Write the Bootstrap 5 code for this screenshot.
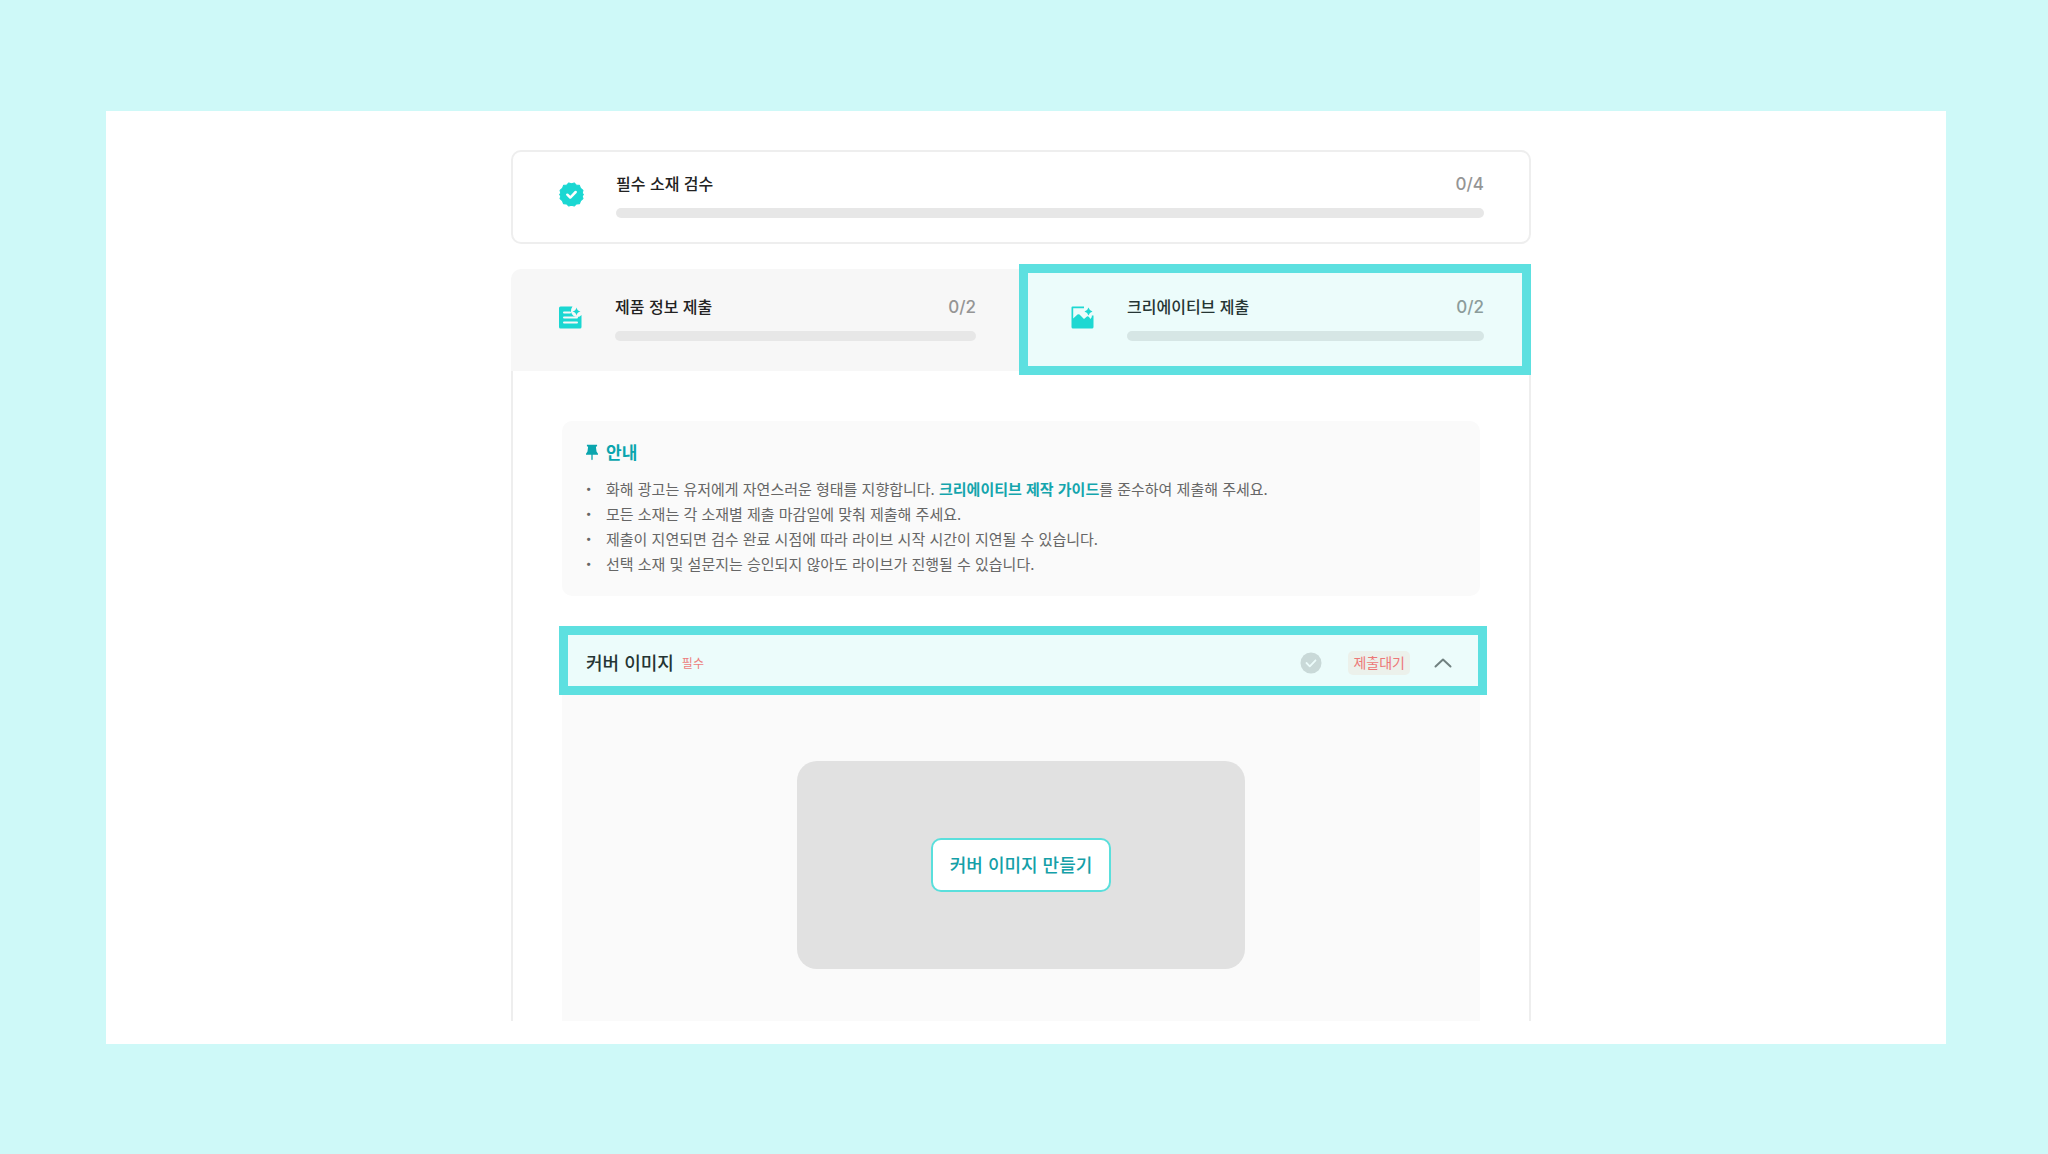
<!DOCTYPE html>
<html lang="ko">
<head>
<meta charset="utf-8">
<meta name="viewport" content="width=device-width, initial-scale=1">
<title>크리에이티브 제출</title>
<link rel="stylesheet" href="https://cdn.jsdelivr.net/npm/bootstrap@5.3.0/dist/css/bootstrap.min.css">
<style>
  body { background: #cef9f8; font-family: "Noto Sans CJK KR", "Noto Sans", sans-serif; color: #222; }
  .stage { padding: 111px 102px 110px 106px; }
  .sheet { padding: 39px 10px 23px 0; }
  .column-main { max-width: 1020px; }
  .line-soft { border: 2px solid #eeeeee; }
  .check-card { border-radius: 10px; padding: 19px 45px 24px 46px; }
  .step { gap: 32px; }
  .step-icon { width: 25px; height: 25px; flex: none; }
  .step-title { font-size: 16px; line-height: 24px; font-weight: 500; }
  .step-count { font-family: Inter, "Noto Sans CJK KR", sans-serif; font-size: 17px; line-height: 26px; font-weight: 500; color: #959595; }
  .step .progress { height: 10px; border-radius: 5px; margin-top: 11px; --bs-progress-bg: #e7e7e7; }
  .step-tabs { margin-top: 25px; }
  .step-tab { border: 0; padding: 25px 45px 30px 47px; background: #f7f7f7; color: inherit; }
  .step-tab:first-child { border-radius: 10px 0 0 0; }
  .step-tab.active { background: #fff; padding: 25px 47px 30px 49px; }
  .spotlight { position: relative; }
  .spotlight::after { content: ""; position: absolute; border: 9px solid #5de0e0; background: rgba(65, 225, 220, .1); background-clip: padding-box; pointer-events: none; }
  .step-tab.spotlight::after { inset: -5px 0 -4px -2px; }
  .tab-body { border-width: 0 2px; padding: 50px 49px 0; }
  .notice { background: #fafafa; border-radius: 10px; padding: 19px 24px 20px; }
  .notice-title { font-size: 17px; line-height: 24px; color: #0aa5ae; gap: 8px; margin-bottom: 12px; }
  .notice-title svg { width: 12px; height: 17px; }
  .notice ul { padding-left: 20px; font-size: 15px; line-height: 25px; color: #666; list-style: none; }
  .notice li::before { content: "·"; float: left; width: 20px; margin-left: -20px; font-weight: 900; }
  .notice a { color: #14a5ad; }
  .asset { background: #fafafa; margin-top: 33px; }
  .asset-head { background: #fff; padding: 21px 24px 19px; }
  .asset-head.spotlight::after { inset: -3px -7px 0 -3px; }
  .asset-title { font-size: 18px; line-height: 24px; font-weight: 500; padding-bottom: 2px; }
  .required { font-size: 12px; line-height: 24px; color: #ff7272; margin-left: 8px; }
  .state-icon { width: 22px; height: 22px; margin-right: 26px; }
  .state-badge { font-size: 14px; line-height: 22px; color: #ff6c6c; background: #fff3ee; border-radius: 5px; padding: 0 5px 2px; margin-right: 20px; }
  .fold { border: 0; background: none; line-height: 0; }
  .asset-body { padding: 66px 24px 52px; }
  .cover-box { max-width: 448px; min-height: 208px; background: #e1e1e1; border-radius: 20px; }
  .btn-cover { --bs-btn-color: #14a0a8; --bs-btn-bg: #fff; --bs-btn-border-color: #5adfdc; --bs-btn-border-width: 2px; --bs-btn-border-radius: 10px; --bs-btn-font-size: 18px; --bs-btn-font-weight: 500; --bs-btn-line-height: 24px; --bs-btn-padding-x: 17px; --bs-btn-padding-y: 12px; --bs-btn-hover-color: #14a0a8; --bs-btn-hover-bg: #ecfcfb; --bs-btn-hover-border-color: #5adfdc; padding-bottom: 14px; }
</style>
<script src="https://cdn.jsdelivr.net/npm/bootstrap@5.3.0/dist/js/bootstrap.bundle.min.js"></script>
</head>
<body>
<div class="stage">
  <main class="sheet bg-white">
    <div class="column-main mx-auto">

      <section class="check-card line-soft step d-flex align-items-center">
        <svg class="step-icon" viewBox="0 0 24 24" aria-hidden="true"><path fill="#1ad7d2" stroke="#1ad7d2" stroke-linejoin="round" d="M12 1.600 14.600.9 16.600 3 19.600 3.200 20.600 6 23 8 22.300 10.600 23.400 12 22.300 13.600 23 16 20.700 18 19.700 20.800 16.700 21 14.600 23.100 12 22.300 9.400 23.100 7.300 21 4.300 20.800 3.300 18 1 16 1.700 13.600.6 12 1.700 10.600 1 8 3.400 6 4.400 3.200 7.400 3 9.400.9Z"/><path d="m8 12.200 2.800 2.700L16 9.600" fill="none" stroke="#fff" stroke-width="2.400" stroke-linecap="round" stroke-linejoin="round"/></svg>
        <div class="flex-grow-1">
          <div class="d-flex justify-content-between"><span class="step-title">필수 소재 검수</span><span class="step-count">0/4</span></div>
          <div class="progress" role="progressbar" aria-label="필수 소재 검수" aria-valuenow="0" aria-valuemin="0" aria-valuemax="4"></div>
        </div>
      </section>

      <div class="step-tabs row g-0" role="tablist">
        <button type="button" role="tab" aria-selected="false" class="step-tab step col-6 d-flex align-items-center text-start">
          <svg class="step-icon" viewBox="0 0 25 25" aria-hidden="true"><path fill="#1ad7d2" d="M2.500 1.500H14.500Q12.500 4 13 7Q14.500 12 19.500 12Q22 12 23.500 10V22Q23.500 23.500 22 23.500H2.500Q1 23.500 1 22V3Q1 1.500 2.500 1.500Z"/><path fill="#1ad7d2" d="M18.500 2.500q.7 3.400 4 4q-3.300.7-4 4q-.7-3.300-4-4q3.300-.6 4-4Z"/><path stroke="#f7f7f7" stroke-width="2" stroke-linecap="round" d="M6 7.500h6M6 12.500h13M6 17.500h13"/></svg>
          <span class="flex-grow-1">
            <span class="d-flex justify-content-between"><span class="step-title">제품 정보 제출</span><span class="step-count">0/2</span></span>
            <span class="progress" role="progressbar" aria-label="제품 정보 제출" aria-valuenow="0" aria-valuemin="0" aria-valuemax="2"></span>
          </span>
        </button>
        <button type="button" role="tab" aria-selected="true" class="step-tab active spotlight step col-6 d-flex align-items-center text-start">
          <svg class="step-icon" viewBox="0 0 25 25" aria-hidden="true"><path fill="#1ad7d2" d="M2.500 1.500H14V3.200H3.200V13.500L7.500 9.500Q8.500 8.800 9.500 9.500L14 14L17 11.500Q18 11 19 12L20.500 14L21.800 12V10.500H23.500V22Q23.500 23.500 22 23.500H3Q1.500 23.500 1.500 22V2.500Q1.500 1.500 2.500 1.500Z"/><path fill="#1ad7d2" d="M18.500 2.500q.8 3 4 4q-3.200.8-4 4q-.8-3.200-4-4q3.200-1 4-4Z"/></svg>
          <span class="flex-grow-1">
            <span class="d-flex justify-content-between"><span class="step-title">크리에이티브 제출</span><span class="step-count">0/2</span></span>
            <span class="progress" role="progressbar" aria-label="크리에이티브 제출" aria-valuenow="0" aria-valuemin="0" aria-valuemax="2"></span>
          </span>
        </button>
      </div>

      <div class="tab-body line-soft" role="tabpanel">
        <section class="notice">
          <h2 class="notice-title fw-bold d-flex align-items-center"><svg viewBox="0 0 13 17" aria-hidden="true"><path fill="#0aa5ae" d="M1 0h11v1.600l-1.300.6.7 5.300L13 9.800V11H7.200v5L6.500 17l-.7-1v-5H0V9.800l1.600-2.300.7-5.300L1 1.600Z"/></svg>안내</h2>
          <ul class="mb-0">
            <li>화해 광고는 유저에게 자연스러운 형태를 지향합니다. <a href="#" class="fw-bold text-decoration-none">크리에이티브 제작 가이드</a>를 준수하여 제출해 주세요.</li>
            <li>모든 소재는 각 소재별 제출 마감일에 맞춰 제출해 주세요.</li>
            <li>제출이 지연되면 검수 완료 시점에 따라 라이브 시작 시간이 지연될 수 있습니다.</li>
            <li>선택 소재 및 설문지는 승인되지 않아도 라이브가 진행될 수 있습니다.</li>
          </ul>
        </section>

        <section class="asset">
          <div class="asset-head spotlight d-flex align-items-center">
            <h2 class="asset-title mb-0">커버 이미지</h2>
            <span class="required">필수</span>
            <svg class="state-icon ms-auto" viewBox="0 0 22 22" aria-hidden="true"><circle cx="11" cy="11" r="10.500" fill="#d8d8d8"/><path d="m6.500 11 3.300 3.300 5.700-6" fill="none" stroke="#fff" stroke-width="1.800" stroke-linecap="round" stroke-linejoin="round"/></svg>
            <span class="state-badge">제출대기</span>
            <button type="button" class="fold p-1" data-bs-toggle="collapse" data-bs-target="#coverBody" aria-expanded="true" aria-controls="coverBody" aria-label="커버 이미지 접기">
              <svg width="18" height="10" viewBox="0 0 18 10" aria-hidden="true"><path d="M1.500 8.500 9 1.500l7.500 7" fill="none" stroke="#777" stroke-width="2" stroke-linecap="round" stroke-linejoin="round"/></svg>
            </button>
          </div>
          <div id="coverBody" class="collapse show">
            <div class="asset-body">
              <div class="cover-box mx-auto d-flex align-items-center justify-content-center">
                <button type="button" class="btn btn-cover">커버 이미지 만들기</button>
              </div>
            </div>
          </div>
        </section>
      </div>

    </div>
  </main>
</div>
</body>
</html>
